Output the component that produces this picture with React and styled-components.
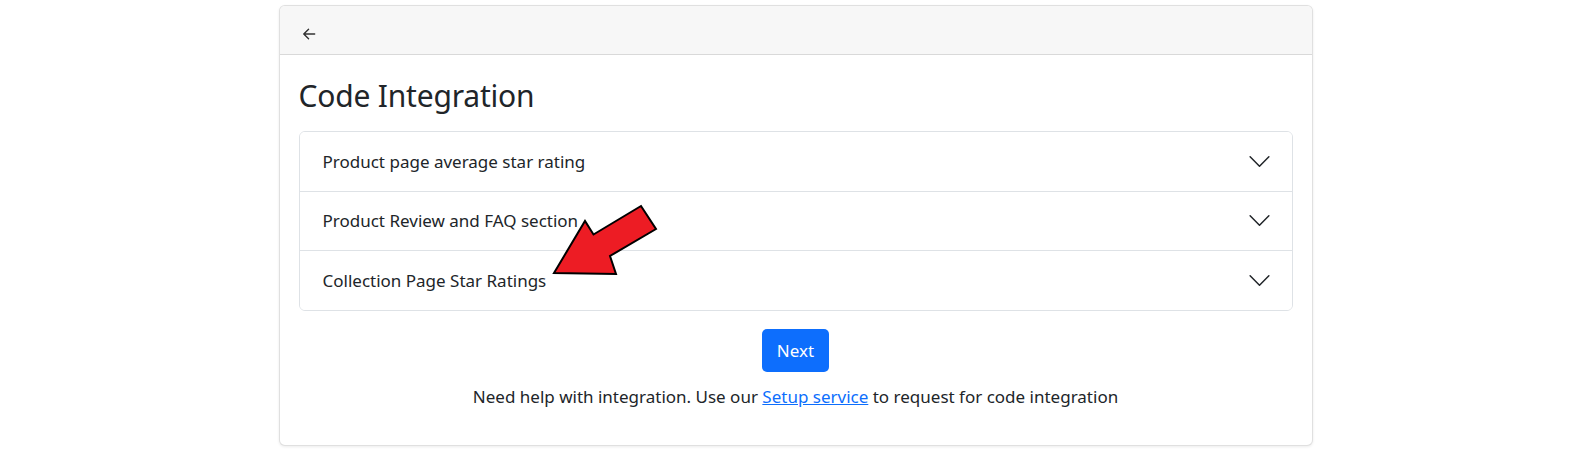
import React from "react";
import styled, { createGlobalStyle } from "styled-components";

const Global = createGlobalStyle`
  html, body { margin: 0; padding: 0; background: #fff; }
  body {
    font-family: "Noto Sans", "Open Sans", "Liberation Sans", sans-serif;
    color: #212529;
    font-size: 17px;
    line-height: 1.5;
  }
  * { box-sizing: border-box; }
`;

const Page = styled.div`
  position: relative;
  width: 100%;
  height: 450px;
  padding: 5px 0 0 9px;
`;

const Card = styled.div`
  width: 1034px;
  margin: 0 auto;
  border: 1px solid rgba(0, 0, 0, 0.12);
  border-radius: 6px;
  background: #fff;
  box-shadow: 0 1px 3px rgba(0, 0, 0, 0.08);
  overflow: hidden;
`;

const Header = styled.div`
  height: 49px;
  display: flex;
  align-items: center;
  padding: 0 22px;
  background: #f7f7f7;
  border-bottom: 1px solid rgba(0, 0, 0, 0.12);
`;

const BackButton = styled.button`
  border: 0;
  background: none;
  padding: 0;
  margin-top: 8px;
  display: flex;
  align-items: center;
  color: #333;
  cursor: pointer;
`;

const Body = styled.div`
  padding: 23px 19px 36px;
`;

const Title = styled.h2`
  margin: 0 0 17px;
  font-size: 30px;
  font-weight: 400;
  line-height: 36px;
  letter-spacing: -0.2px;
`;

const Accordion = styled.div`
  border: 1px solid #dee2e6;
  border-radius: 6px;
  overflow: hidden;
`;

const Item = styled.div`
  & + & { border-top: 1px solid #dee2e6; }
`;

const ItemButton = styled.button`
  width: 100%;
  height: 58.5px;
  display: flex;
  align-items: center;
  justify-content: space-between;
  padding: 0 20px 0 23px;
  border: 0;
  background: #fff;
  font-family: inherit;
  font-size: 17px;
  color: #212529;
  text-align: left;
  cursor: pointer;
`;

const Footer = styled.div`
  display: flex;
  flex-direction: column;
  align-items: center;
  margin-top: 18px;
  gap: 12px;
`;

const NextButton = styled.button`
  height: 43px;
  padding: 0 14.5px;
  border: 0;
  border-radius: 5px;
  background: #0d6efd;
  color: #fff;
  font-family: inherit;
  font-size: 17px;
  cursor: pointer;
`;

const Help = styled.p`
  margin: 0;
  font-size: 17px;
  line-height: 25.5px;
  color: #212529;
`;

const Link = styled.a`
  color: #0d6efd;
  text-decoration: underline;
`;

const Annotation = styled.svg`
  position: absolute;
  left: 540px;
  top: 195px;
  pointer-events: none;
`;

const Chevron = () => (
  <svg width="25" height="25" viewBox="0 0 16 16" fill="none">
    <path d="M2 5L8 11L14 5" stroke="#212529" strokeWidth="0.95" strokeLinecap="round" strokeLinejoin="round" />
  </svg>
);

const ArrowLeft = () => (
  <svg width="14" height="14" viewBox="0 0 16 16" fill="none">
    <path d="M14.5 8H2M7.5 2.5L2 8L7.5 13.5" stroke="#333" strokeWidth="1.6" strokeLinecap="round" strokeLinejoin="round" />
  </svg>
);

const items = [
  "Product page average star rating",
  "Product Review and FAQ section",
  "Collection Page Star Ratings",
];

export default function App() {
  return (
    <Page>
      <Global />
      <Card>
        <Header>
          <BackButton aria-label="Back">
            <ArrowLeft />
          </BackButton>
        </Header>
        <Body>
          <Title>Code Integration</Title>
          <Accordion>
            {items.map((t) => (
              <Item key={t}>
                <ItemButton>
                  <span>{t}</span>
                  <Chevron />
                </ItemButton>
              </Item>
            ))}
          </Accordion>
          <Footer>
            <NextButton>Next</NextButton>
            <Help>
              Need help with integration. Use our <Link href="#">Setup service</Link> to request for code integration
            </Help>
          </Footer>
        </Body>
      </Card>
      <Annotation width="130" height="90" viewBox="540 195 130 90">
        <polygon
          points="554,273 585,221 593.5,234.5 641,206 656,229 610,256 616,274"
          fill="#ed1c24"
          stroke="#000"
          strokeWidth="2"
          strokeLinejoin="miter"
        />
      </Annotation>
    </Page>
  );
}
